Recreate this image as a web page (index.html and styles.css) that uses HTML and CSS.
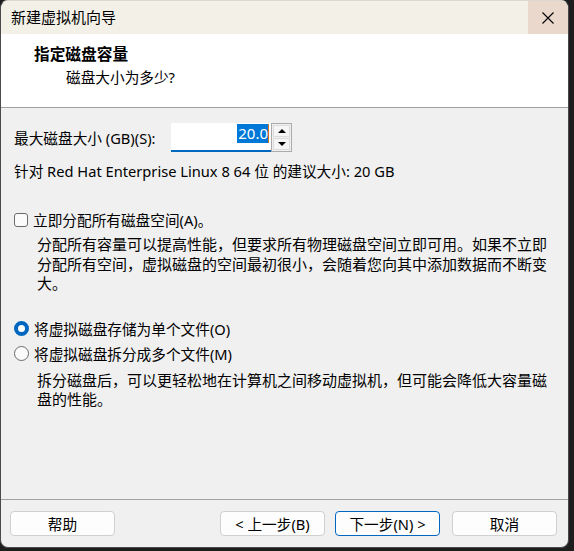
FILE: index.html
```html
<!DOCTYPE html>
<html lang="zh-CN">
<head>
<meta charset="utf-8">
<title>新建虚拟机向导</title>
<link rel="stylesheet" href="styles.css">
</head>
<body>
<div class="window">
  <div class="titlebar">
    <span class="title">新建虚拟机向导</span>
    <div class="close">
      <svg width="12" height="12" viewBox="0 0 12 12"><path d="M0.5 0.5 L11.5 11.5 M11.5 0.5 L0.5 11.5" stroke="#000" stroke-width="1.1" fill="none"/></svg>
    </div>
  </div>
  <div class="header">
    <div class="h-title">指定磁盘容量</div>
    <div class="h-sub">磁盘大小为多少?</div>
  </div>
  <div class="content">
    <div class="size-row">
      <span class="size-label">最大磁盘大小 (GB)(S):</span>
      <div class="num-input"><span class="sel">20.0</span><span class="caret"></span></div>
      <div class="spin">
        <div class="spin-btn"><span class="tri-up"></span></div>
        <div class="spin-btn"><span class="tri-down"></span></div>
      </div>
    </div>
    <div class="rec">针对 Red Hat Enterprise Linux 8 64 位 的建议大小: 20 GB</div>
    <div class="option opt-check">
      <span class="checkbox"></span>
      <span>立即分配所有磁盘空间(A)。</span>
    </div>
    <div class="desc desc1">
      <div>分配所有容量可以提高性能，但要求所有物理磁盘空间立即可用。如果不立即</div>
      <div>分配所有空间，虚拟磁盘的空间最初很小，会随着您向其中添加数据而不断变</div>
      <div>大。</div>
    </div>
    <div class="option opt-r1">
      <span class="radio checked"></span>
      <span>将虚拟磁盘存储为单个文件(O)</span>
    </div>
    <div class="option opt-r2">
      <span class="radio"></span>
      <span>将虚拟磁盘拆分成多个文件(M)</span>
    </div>
    <div class="desc desc2">
      <div>拆分磁盘后，可以更轻松地在计算机之间移动虚拟机，但可能会降低大容量磁</div>
      <div>盘的性能。</div>
    </div>
  </div>
  <div class="footer">
    <button class="btn">帮助</button>
    <div class="spacer"></div>
    <button class="btn">&lt; 上一步(B)</button>
    <button class="btn primary">下一步(N) &gt;</button>
    <button class="btn cancel">取消</button>
  </div>
</div>
</body>
</html>
```
FILE: styles.css
```css
html, body {
  margin: 0;
  padding: 0;
}
body {
  background: #1e1e1e;
  width: 574px;
  height: 551px;
  overflow: hidden;
  font-family: "Noto Sans", "Noto Sans CJK SC", sans-serif;
  color: #000;
}
.window {
  box-sizing: border-box;
  width: 569px;
  height: 548px;
  border: 1px solid #4a4a4a;
  border-top-color: #dcdad0;
  border-radius: 8px;
  overflow: hidden;
  background: #f0f0f0;
  display: flex;
  flex-direction: column;
}
.titlebar {
  height: 33px;
  background: #f2f0e7;
  display: flex;
  align-items: center;
  flex-shrink: 0;
}
.title {
  padding-left: 10px;
  font-size: 15px;
  line-height: 20px;
  flex: 1;
  margin-top: -1px;
}
.close {
  width: 40px;
  height: 33px;
  background: #ebd8cd;
  display: flex;
  align-items: center;
  justify-content: center;
}
.header {
  background: #fff;
  border-bottom: 1px solid #a0a0a0;
  box-sizing: border-box;
  height: 74px;
  padding-left: 33px;
  padding-top: 10px;
  flex-shrink: 0;
}
.h-title {
  font-size: 15.7px;
  font-weight: bold;
  line-height: 20px;
}
.h-sub {
  font-size: 14.67px;
  line-height: 20px;
  padding-left: 32px;
  margin-top: 3px;
}
.content {
  flex: 1;
  padding-left: 13px;
  padding-top: 15px;
  font-size: 14.67px;
}
.size-row {
  display: flex;
  align-items: center;
  height: 29px;
}
.size-label {
  width: 157px;
  line-height: 20px;
}
.num-input {
  box-sizing: border-box;
  width: 100px;
  height: 29px;
  background: #fff;
  border-bottom: 2px solid #0067c0;
  display: flex;
  justify-content: flex-end;
  align-items: flex-start;
  padding-top: 1px;
  padding-right: 2px;
}
.sel {
  background: #0078d7;
  color: #fff;
  font-size: 15px;
  line-height: 19px;
  padding: 0 0 0 1px;
}
.caret {
  width: 1px;
  height: 19px;
  background: #d07020;
}
.spin {
  box-sizing: border-box;
  width: 21px;
  height: 29px;
  border: 1px solid #ababab;
  background: #f0f0f0;
  display: flex;
  flex-direction: column;
  padding: 1px;
  gap: 1px;
}
.spin-btn {
  flex: 1;
  background: #f6f6f6;
  border: 1px solid #dcdcdc;
  display: flex;
  align-items: center;
  justify-content: center;
}
.tri-up {
  width: 0;
  height: 0;
  border-left: 4px solid transparent;
  border-right: 4px solid transparent;
  border-bottom: 4px solid #000;
}
.tri-down {
  width: 0;
  height: 0;
  border-left: 4px solid transparent;
  border-right: 4px solid transparent;
  border-top: 4px solid #000;
}
.rec {
  margin-top: 9px;
  line-height: 20px;
}
.option {
  display: flex;
  align-items: center;
  height: 20px;
  line-height: 20px;
}
.opt-check {
  margin-top: 29px;
}
.opt-r1 {
  margin-top: 25px;
}
.opt-r2 {
  margin-top: 5px;
}
.checkbox {
  box-sizing: border-box;
  width: 14px;
  height: 14px;
  border: 1px solid #6b6b6b;
  border-radius: 3px;
  background: #fbfbfb;
  margin-right: 5px;
}
.radio {
  box-sizing: border-box;
  width: 15px;
  height: 15px;
  border: 1px solid #6b6b6b;
  border-radius: 50%;
  background: #fbfbfb;
  margin-right: 5px;
}
.radio.checked {
  border: 4.5px solid #0067c0;
  background: #fff;
}
.desc {
  margin-left: 23px;
  font-size: 15px;
  line-height: 19.5px;
  white-space: nowrap;
}
.desc1 {
  margin-top: 5px;
}
.desc2 {
  margin-top: 7px;
}
.footer {
  flex-shrink: 0;
  border-top: 1px solid #a0a0a0;
  display: flex;
  align-items: flex-start;
  padding: 11px 11px 0 9px;
  box-sizing: border-box;
  height: 48px;
  gap: 10px;
}
.spacer {
  flex: 1;
}
.btn {
  width: 105px;
  height: 25px;
  box-sizing: border-box;
  background: #fdfdfd;
  border: 1px solid #d0d0d0;
  border-radius: 4px;
  font-family: "Noto Sans", "Noto Sans CJK SC", sans-serif;
  font-size: 14.67px;
  line-height: 20px;
  color: #000;
  padding: 0;
}
.btn.primary {
  border-color: #0067c0;
}
.btn.cancel {
  margin-left: 2px;
}
```
